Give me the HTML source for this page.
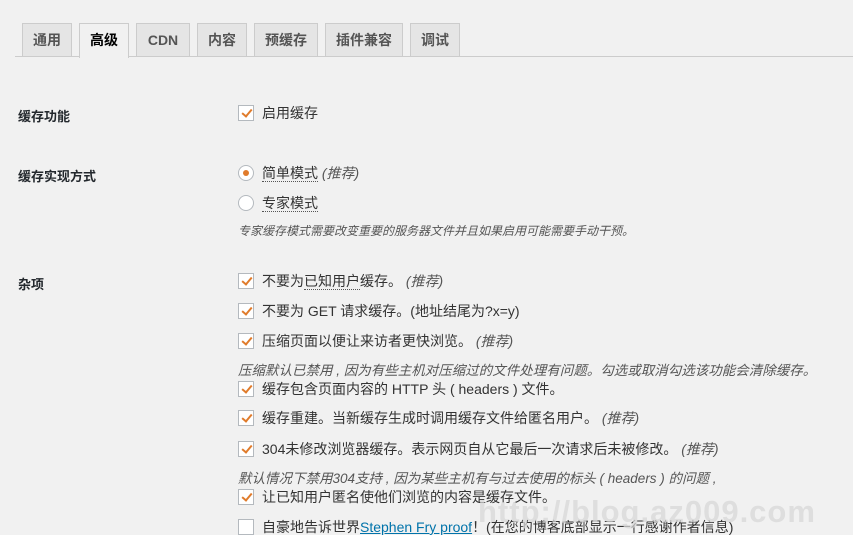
<!DOCTYPE html>
<html><head><meta charset="utf-8"><style>
body{margin:0;width:853px;height:535px;background:#f1f1f1;overflow:hidden;position:relative;font-family:"Liberation Sans","Noto Sans CJK SC",sans-serif;color:#23282d}
.tab{position:absolute;top:23px;height:33px;border:1px solid #ccc;border-bottom:none;background:#e5e5e5;font-size:14px;font-weight:bold;color:#555;line-height:33px;text-align:center;box-sizing:border-box}
.tab.act{background:#f1f1f1;color:#000;height:35px}
.line{position:absolute;left:15px;right:0;top:56px;border-top:1px solid #ccc}
.lab{position:absolute;left:18px;font-size:13px;font-weight:bold}
.row{position:absolute;left:238px;font-size:14px;line-height:16px;white-space:nowrap;color:#333}
.cb{display:inline-block;width:16px;height:16px;border:1px solid #b4b9be;background:#fff;box-sizing:border-box;vertical-align:top;margin-right:8px;position:relative}
.cb.c::after{content:"";position:absolute;left:5px;top:1px;width:4px;height:8px;border:solid #e07b2b;border-width:0 2.5px 2.5px 0;transform:rotate(40deg)}
.rd{display:inline-block;width:16px;height:16px;border:1px solid #b4b9be;border-radius:50%;background:#fff;box-sizing:border-box;vertical-align:top;margin-right:8px;position:relative}
.rd.c::after{content:"";position:absolute;left:4px;top:4px;width:6px;height:6px;border-radius:50%;background:#e07b2b}
i{color:#555}
.d{position:absolute;left:238px;font-size:13px;font-style:italic;color:#555;white-space:nowrap}
.u{border-bottom:1px dotted #555}
</style></head><body>
<div class="line"></div>
<div class="tab" style="left:22px;width:50px">通用</div>
<div class="tab act" style="left:79px;width:50px">高级</div>
<div class="tab" style="left:136px;width:54px">CDN</div>
<div class="tab" style="left:197px;width:50px">内容</div>
<div class="tab" style="left:254px;width:64px">预缓存</div>
<div class="tab" style="left:325px;width:78px">插件兼容</div>
<div class="tab" style="left:410px;width:50px">调试</div>

<div class="lab" style="top:106px">缓存功能</div>
<div class="lab" style="top:166px">缓存实现方式</div>
<div class="lab" style="top:274px">杂项</div>

<div class="row" style="top:105px"><span class="cb c"></span>启用缓存</div>
<div class="row" style="top:165px"><span class="rd c"></span><span class="u">简单模式</span> <i>(推荐)</i></div>
<div class="row" style="top:195px"><span class="rd"></span><span class="u">专家模式</span></div>
<div class="d" style="top:222px;font-size:12px">专家缓存模式需要改变重要的服务器文件并且如果启用可能需要手动干预。</div>
<div class="row" style="top:273px"><span class="cb c"></span>不要为<span class="u">已知用户</span>缓存。 <i>(推荐)</i></div>
<div class="row" style="top:303px"><span class="cb c"></span>不要为 GET 请求缓存。(地址结尾为?x=y)</div>
<div class="row" style="top:333px"><span class="cb c"></span>压缩页面以便让来访者更快浏览。 <i>(推荐)</i></div>
<div class="d" style="top:359px;font-size:13.5px">压缩默认已禁用 , 因为有些主机对压缩过的文件处理有问题。勾选或取消勾选该功能会清除缓存。</div>
<div class="row" style="top:381px"><span class="cb c"></span>缓存包含页面内容的 HTTP 头 ( headers ) 文件。</div>
<div class="row" style="top:410px"><span class="cb c"></span>缓存重建。当新缓存生成时调用缓存文件给匿名用户。 <i>(推荐)</i></div>
<div class="row" style="top:441px"><span class="cb c"></span>304未修改浏览器缓存。表示网页自从它最后一次请求后未被修改。 <i>(推荐)</i></div>
<div class="d" style="top:467px;font-size:13.5px">默认情况下禁用304支持 , 因为某些主机有与过去使用的标头 ( headers ) 的问题 ,</div>
<div class="row" style="top:489px"><span class="cb c"></span>让已知用户匿名使他们浏览的内容是缓存文件。</div>
<div class="row" style="top:519px"><span class="cb"></span>自豪地告诉世界<span style="color:#0073aa;text-decoration:underline">Stephen Fry proof</span>！(在您的博客底部显示一行感谢作者信息)</div>
<div style="position:absolute;left:478px;top:494px;font-size:31px;font-weight:bold;color:rgba(215,215,215,0.75);font-family:'Liberation Sans',sans-serif;white-space:nowrap;letter-spacing:1px">http://blog.az009.com</div>
</body></html>
